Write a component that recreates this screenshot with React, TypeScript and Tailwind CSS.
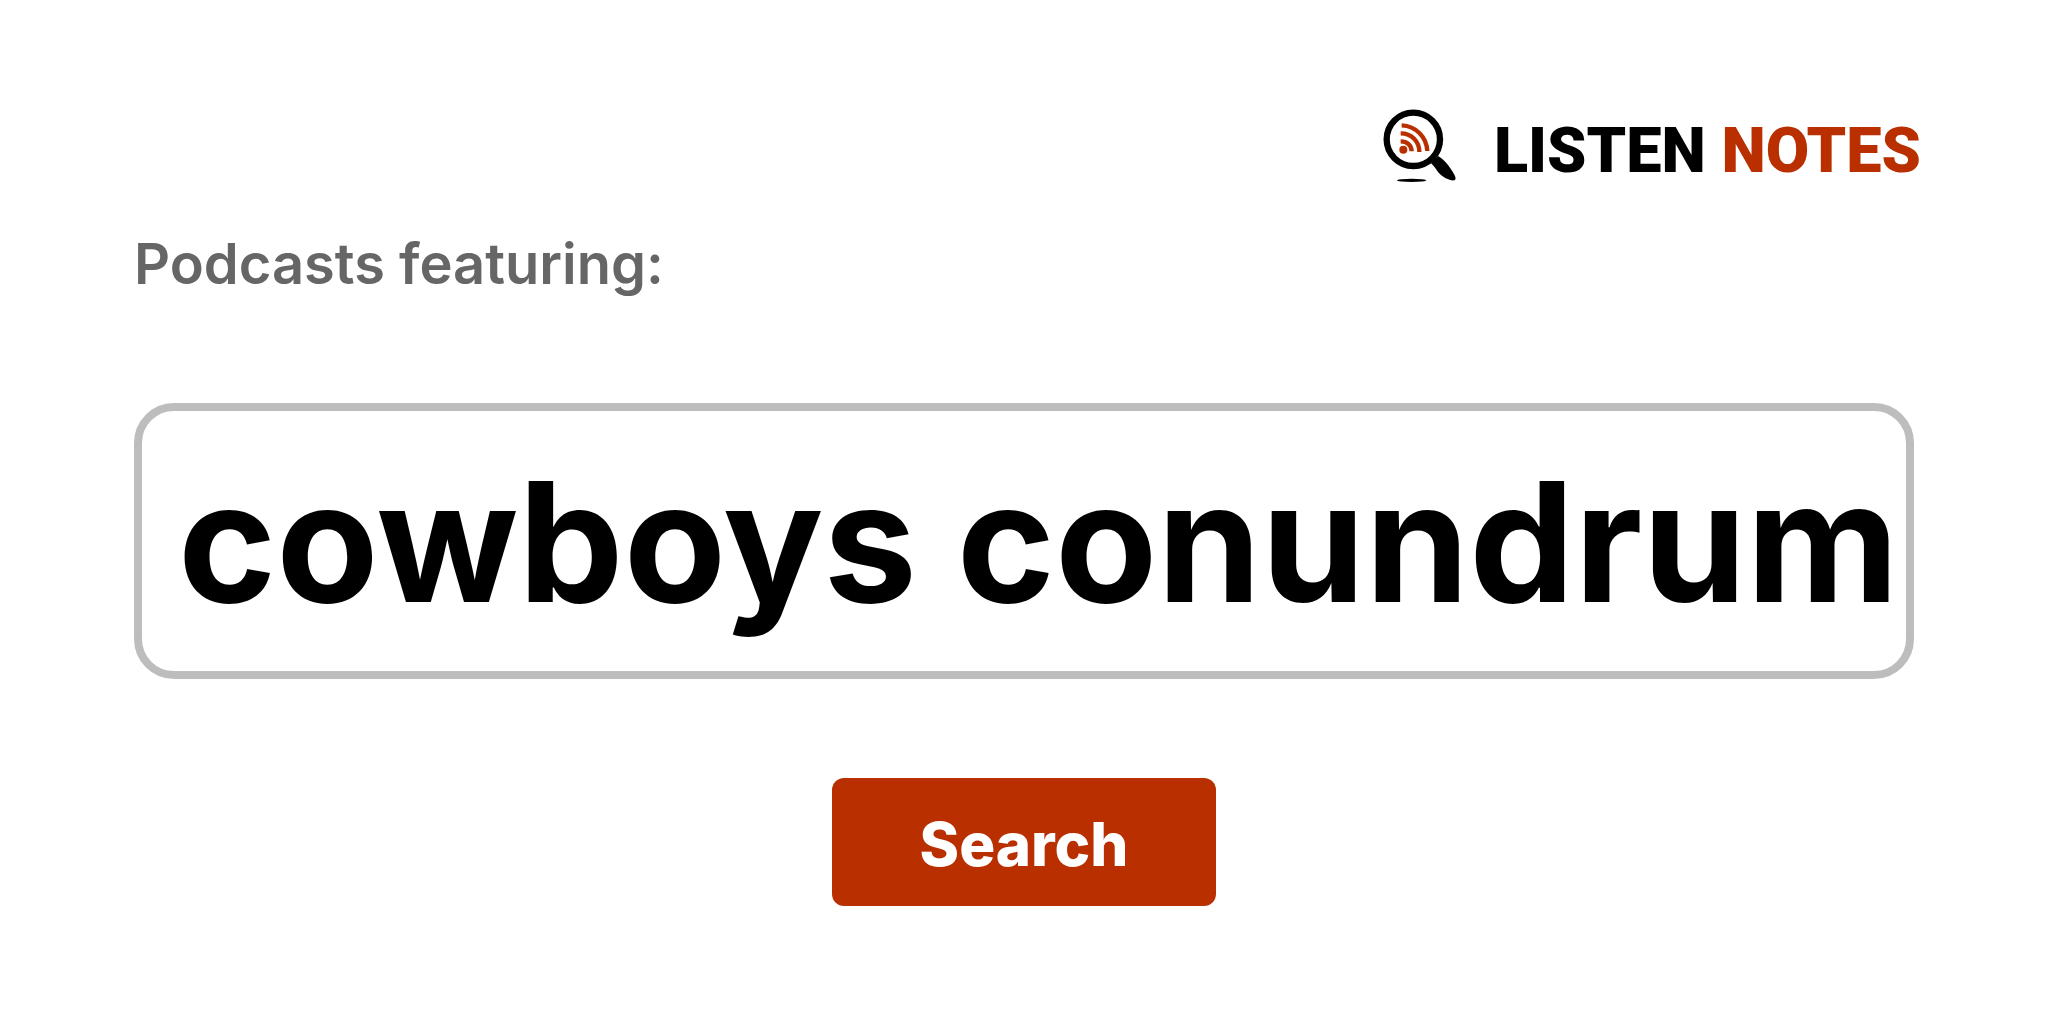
import { useState } from 'react';

function MagnifierLogo({ className }: { className?: string }) {
  return (
    <svg viewBox="40 41 219 222" className={className} aria-hidden="true">
      <circle cx="131" cy="132" r="80" fill="#fff" stroke="#000" strokeWidth="19" />
      <path d="M184 204 L205 182 C224 193 240 213 254 238 C259 247 259 254 253 255 C241 257 219 245 207 232 C199 223 194 212 184 204 Z" fill="#000" />
      <ellipse cx="126" cy="255" rx="44" ry="5" fill="#000" />
      <circle cx="101" cy="163" r="12" fill="#b92f00" />
      <g fill="none" stroke="#b92f00" strokeWidth="13">
        <path d="M93 138 C112 138 126 150 126 168" />
        <path d="M93 114 C126 114 149 138 149 170" />
        <path d="M96 90 C139 92 171 125 173 167" />
      </g>
    </svg>
  );
}

export default function App() {
  const [query, setQuery] = useState('cowboys conundrum');

  return (
    <main className="min-h-screen bg-white font-[Inter,sans-serif]">
      <header className="flex h-[184px] justify-end pt-[109px] pr-[127px]">
        <a href="/" className="flex items-start gap-[38px]">
          <MagnifierLogo className="h-[74px] w-[73px]" />
          <span className="font-[Roboto,sans-serif] text-[63px] leading-[84px] font-black text-black">
            LISTEN <span className="text-[#b92f00]">NOTES</span>
          </span>
        </a>
      </header>

      <form onSubmit={(e) => e.preventDefault()} className="flex flex-col px-[134px]">
        <label htmlFor="query" className="mt-[46px] text-[56px] leading-[68px] font-semibold text-[#666]">
          Podcasts featuring:
        </label>
        <input
          id="query"
          type="text"
          value={query}
          onChange={(e) => setQuery(e.target.value)}
          className="mt-[105px] h-[276px] w-full rounded-[40px] border-8 border-[#bdbdbd] pl-9 text-[167px] font-bold text-black outline-none"
        />
        <button
          type="submit"
          className="mt-[99px] h-32 w-96 self-center rounded-xl bg-[#b92f00] pt-1 text-[60px] font-extrabold text-white"
        >
          Search
        </button>
      </form>
    </main>
  );
}
